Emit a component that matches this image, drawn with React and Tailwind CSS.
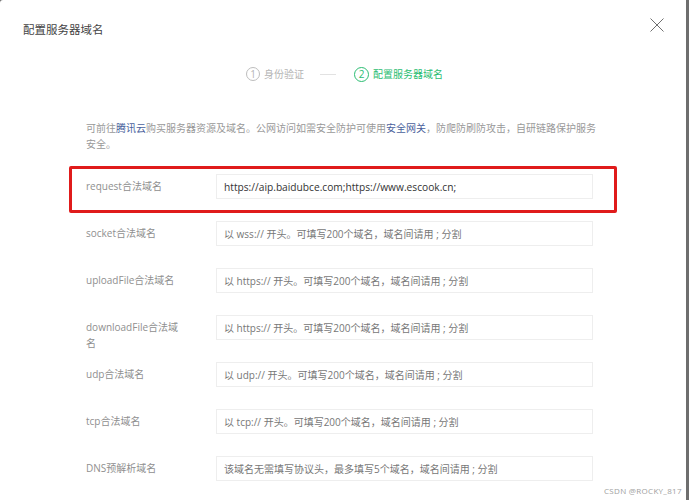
const FONT = "font-['Open_Sans','Noto_Sans_CJK_SC',sans-serif]";

const rows = [
  { label: "request合法域名", value: "https://aip.baidubce.com;https://www.escook.cn;" },
  { label: "socket合法域名", hint: "以 wss:// 开头。可填写200个域名，域名间请用 ; 分割" },
  { label: "uploadFile合法域名", hint: "以 https:// 开头。可填写200个域名，域名间请用 ; 分割" },
  { label: "downloadFile合法域名", hint: "以 https:// 开头。可填写200个域名，域名间请用 ; 分割" },
  { label: "udp合法域名", hint: "以 udp:// 开头。可填写200个域名，域名间请用 ; 分割" },
  { label: "tcp合法域名", hint: "以 tcp:// 开头。可填写200个域名，域名间请用 ; 分割" },
  { label: "DNS预解析域名", hint: "该域名无需填写协议头，最多填写5个域名，域名间请用 ; 分割" },
];

function Row({ label, value, hint }) {
  return (
    <div className="flex items-start h-[47px] shrink-0">
      <div className="w-[100px] mr-[30px] pt-[4px] text-[10px] leading-[16px] text-[#8f8f8f] break-all">{label}</div>
      <input
        readOnly
        value={value || ""}
        placeholder={hint}
        className="w-[377px] h-[25px] px-[7px] border border-[#eeeeee] bg-white text-[10.2px] text-[#333333] placeholder:text-[10px] placeholder:text-[#777777] outline-none"
      />
    </div>
  );
}

function Step({ n, text, active }) {
  return (
    <div className={`flex items-center gap-[4px] text-[10px] ${active ? "text-[#2bbd72]" : "text-[#b5b5b5]"}`}>
      <span className={`rounded-full border flex items-center justify-center text-[10px] leading-none ${active ? "w-[15px] h-[15px] border-[#2bbd72]" : "w-[14px] h-[14px] border-[#bdbdbd]"}`}>{n}</span>
      <span>{text}</span>
    </div>
  );
}

export default function App() {
  return (
    <div className={`w-[689px] h-[500px] overflow-hidden bg-[#6e6e6e] ${FONT}`}>
      <div className="w-[686px] h-full flex flex-col relative bg-white rounded-tl-[3px]">
        <div className="flex items-start justify-between pl-[23px] pr-[22px] pt-[17px] h-[66px] shrink-0">
          <div className="text-[11.5px] leading-[25px] text-[#444444]">配置服务器域名</div>
          <svg width="14" height="14" viewBox="0 0 14 14" className="mt-[1px]" stroke="#6f6f6f" strokeWidth="1" fill="none">
            <path d="M0.5 0.5 L13.5 13.5 M13.5 0.5 L0.5 13.5" />
          </svg>
        </div>

        <div className="flex items-center pl-[246px] h-[16px] shrink-0">
          <Step n="1" text="身份验证" />
          <div className="w-[16px] h-px bg-[#e2e2e2] ml-[16px] mr-[18px]" />
          <Step n="2" text="配置服务器域名" active />
        </div>

        <div className="pl-[86px] pr-[85px] mt-[38px] text-[10px] leading-[16px] text-[#999999] shrink-0">
          可前往<span className="text-[#4a5f9c]">腾讯云</span>购买服务器资源及域名。公网访问如需安全防护可使用<span className="text-[#4a5f9c]">安全网关</span>，防爬防刷防攻击，自研链路保护服务安全。
        </div>

        <div className="pl-[86px] mt-[22px] flex flex-col shrink-0">
          {rows.map((r) => (
            <Row key={r.label} {...r} />
          ))}
        </div>

        <div className="absolute left-[69px] top-[166px] w-[548px] h-[47px] border-[3px] border-[#e01b1b] rounded-[2px] pointer-events-none" />
        <div className="absolute left-[604px] top-[485px] text-[8px] leading-[12px] tracking-[0.3px] text-[#a0a0a0]">CSDN @ROCKY_817</div>
      </div>
    </div>
  );
}
